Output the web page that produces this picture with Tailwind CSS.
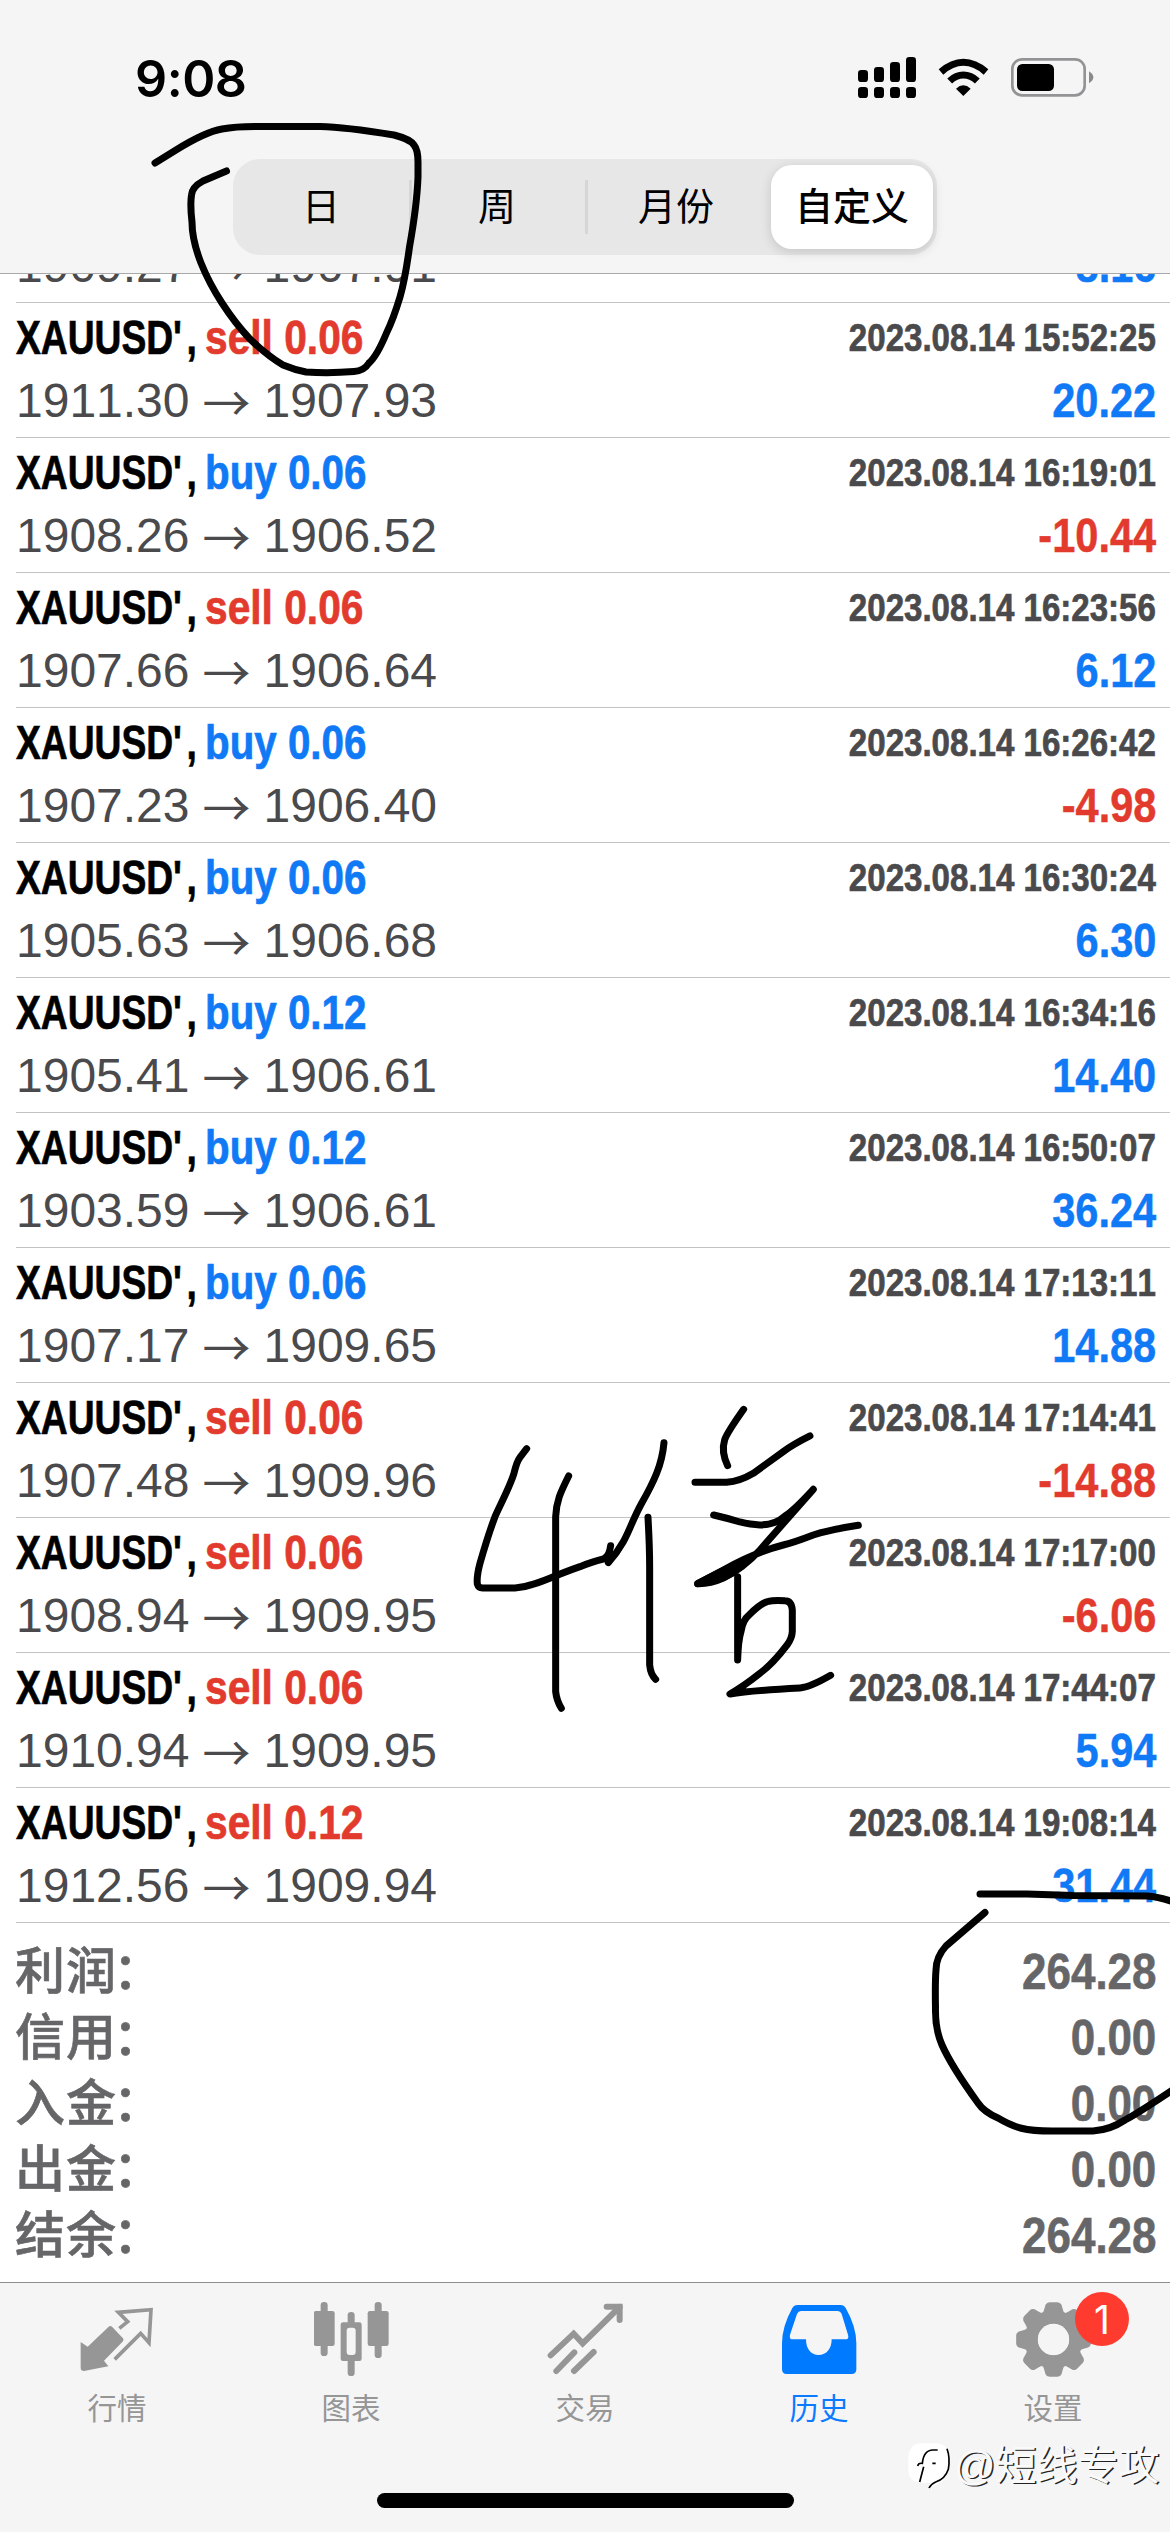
<!DOCTYPE html>
<html lang="zh-CN">
<head>
<meta charset="utf-8">
<title>历史</title>
<script src="https://cdn.jsdelivr.net/npm/@tailwindcss/browser@4"></script>
</head>
<body class="bg-white">
<div class="relative flex h-[2532px] w-[1170px] flex-col overflow-hidden bg-white font-['Liberation_Sans','Noto_Sans_CJK_SC',sans-serif] [font-kerning:none]">

  <header class="flex h-[274px] shrink-0 flex-col border-b border-[#a9a9ac] bg-[#f5f5f6]">
    <div class="flex h-[159px] justify-between pl-[135px] pr-[75px] pt-[46px]">
      <div class="h-[64px] origin-left scale-x-[.985] font-[Inter] text-[51px] font-semibold leading-[66px] tracking-[-0.5px]">9:08</div>
      <svg class="mt-[4px] h-[60px] w-[240px]" viewBox="39 30 720 180">
        <g>
          <rect x="48" y="90" width="30" height="36" rx="10"/><rect x="96" y="81" width="30" height="45" rx="10"/><rect x="144" y="66" width="30" height="60" rx="10"/><rect x="192" y="51" width="30" height="75" rx="10"/>
          <rect x="48" y="141" width="30" height="33" rx="10"/><rect x="96" y="141" width="30" height="33" rx="10"/><rect x="144" y="141" width="30" height="33" rx="10"/><rect x="192" y="141" width="30" height="33" rx="10"/>
        </g>
        <g fill="none" stroke="#000" stroke-width="21">
          <path d="M297 96Q330 67 364 67Q399 67 432 96"/><path d="M323 123Q342 105 364 105Q387 105 406 123"/>
        </g>
        <path d="M342 146Q364 126 386 146L364 168Z"/>
        <rect x="511" y="58" width="217" height="108" rx="29" fill="none" stroke="#939395" stroke-width="8"/>
        <rect x="525" y="72" width="111" height="81" rx="16"/>
        <path d="M741 94Q754 102 754 112Q754 122 741 130Z" fill="#8a8a8c"/>
      </svg>
    </div>
    <div class="ml-[233px] flex h-[96px] w-[704px] items-center rounded-[27px] bg-[#e7e7e8] text-[38px]">
      <div class="w-[176px] text-center">日</div>
      <div class="-mr-[3px] h-[54px] w-[3px] bg-[#d6d6d9]"></div>
      <div class="w-[176px] text-center">周</div>
      <div class="-mr-[3px] h-[54px] w-[3px] bg-[#d6d6d9]"></div>
      <div class="w-[182px] text-center">月份</div>
      <div class="ml-[4px] h-[84px] w-[162px] rounded-[21px] bg-white text-center font-medium leading-[84px] shadow-[0_3px_12px_rgba(0,0,0,.15)]">自定义</div>
    </div>
  </header>

  <main class="flex h-[2008px] shrink-0 flex-col justify-end overflow-hidden">
    <div id="deals" class="flex flex-col"></div>
    <div id="summary" class="flex h-[359px] shrink-0 flex-col pl-[15px] pr-[14px] pt-[16px] text-[#666668]"></div>
  </main>

  <nav class="flex h-[250px] shrink-0 flex-col border-t border-[#8e8e92] bg-[#f5f5f6]">
    <div class="grid grid-cols-5 pt-[19px] text-[29.5px] leading-[40px] text-[#969696]">
      <div class="flex flex-col items-center gap-[12px]">
        <svg class="size-[75px]" viewBox="58 36 225 225" fill="#969696">
          <path d="M60 156L81 170L144 110Q149 106 154 110L187 145Q190 150 187 154L130 212L143 229L70 243Q60 243 60 234Z"/>
          <path d="M176 115L201 95L173 67L271 59L265 158L240 130L162 208" fill="none" stroke="#969696" stroke-width="11"/>
        </svg>
        <div>行情</div>
      </div>
      <div class="flex flex-col items-center gap-[12px]">
        <svg class="size-[75px]" viewBox="760 36 225 225" fill="#969696">
          <rect x="780" y="36" width="21" height="162" rx="10"/><rect x="759" y="63" width="63" height="105" rx="7"/>
          <rect x="942" y="36" width="21" height="168" rx="10"/><rect x="921" y="63" width="63" height="105" rx="7"/>
          <rect x="861" y="66" width="21" height="192" rx="10"/><rect x="840" y="97" width="63" height="116" rx="7"/>
          <rect x="858" y="113" width="27" height="82" rx="9" fill="#f5f5f6"/>
        </svg>
        <div>图表</div>
      </div>
      <div class="flex flex-col items-center gap-[12px]">
        <svg class="size-[75px] overflow-visible" viewBox="52 36 225 225" fill="none" stroke="#969696" stroke-width="18" stroke-linecap="round">
          <path d="M60 196L129 131L156 160L267 51"/><path d="M228 50H267V90" stroke-linejoin="miter"/>
          <path d="M77 243L131 187M130 243L189 186"/>
        </svg>
        <div>交易</div>
      </div>
      <div class="flex flex-col items-center gap-[12px] text-[#0a7aff]">
        <svg class="size-[75px]" viewBox="754 36 225 225">
          <path fill="#007aff" fill-rule="evenodd" d="M800 45H930Q940 45 945 54Q977 110 977 160V238Q977 252 963 252H768Q754 252 754 238V160Q754 110 785 54Q790 45 800 45ZM811 63Q803 63 799 72L778 134Q775 148 786 148H826C826 176 840 195 864 195C888 195 903 176 903 148H944Q956 148 952 134L933 72Q929 63 920 63Z"/>
        </svg>
        <div>历史</div>
      </div>
      <div class="relative flex flex-col items-center gap-[12px]">
        <svg class="size-[75px]" viewBox="-112.5 -112.5 225 225" fill="#969696">
          <path id="tooth" d="M-40 -68L-30 -84Q-27 -92 -24 -104Q-20 -112 -12 -112H12Q20 -112 24 -104Q27 -92 30 -84L40 -68Z"/>
          <use href="#tooth" transform="rotate(45)"/><use href="#tooth" transform="rotate(90)"/><use href="#tooth" transform="rotate(135)"/><use href="#tooth" transform="rotate(180)"/><use href="#tooth" transform="rotate(225)"/><use href="#tooth" transform="rotate(270)"/><use href="#tooth" transform="rotate(315)"/>
          <circle r="67" fill="none" stroke="#969696" stroke-width="41"/>
          <circle r="47" fill="#f5f5f6"/>
        </svg>
        <div>设置</div>
        <div class="absolute left-[139px] top-[-10px] flex size-[54px] items-center justify-center rounded-full bg-[#ff3b30] font-[Inter] text-[39px] leading-none text-white">1</div>
      </div>
    </div>
    <div class="mt-auto mb-[24px] ml-[377px] h-[15px] w-[417px] rounded-full bg-black"></div>
  </nav>

  <!-- watermark -->
  <div class="absolute left-[907px] top-[2438px] flex items-center">
    <svg class="h-[56px] w-[48px]" viewBox="20 486 144 168">
      <path d="M62 502H108Q146 505 146 545V575Q140 620 86 634Q88 626 94 620H62Q24 618 24 580V545Q26 504 62 502Z" fill="#fff"/>
      <path d="M58 618L70 572M52 570Q54 560 66 562Q70 522 98 522H112M96 562H106" fill="none" stroke="#000" stroke-width="5"/>
      <path d="M140 518Q150 545 144 580Q134 610 106 618Q92 624 86 636" fill="none" stroke="#000" stroke-width="5"/>
    </svg>
    <div class="-ml-px whitespace-nowrap text-[41px] leading-[56px] text-[#fafafa] [text-shadow:1.5px_1px_0.5px_#222]">@短线专攻</div>
  </div>

  <!-- pen annotations -->
  <svg class="pointer-events-none absolute left-0 top-0 h-[2532px] w-[1170px]" viewBox="0 0 1170 2532" fill="none" stroke="#000" stroke-width="7" stroke-linecap="round" stroke-linejoin="round">
    <path d="M155 163L176 150Q205 132 222 129Q235 126.500 255 126.500H320Q345 127 394 135Q410 139 414 145Q418 150 418 162V177Q417 205 409.500 247Q405 280 400 297Q393 320 386.500 333Q377 356 369 363Q364 371 354 371.500Q330 373.500 306 372Q295 370 283 365Q266 355 249 338Q235 323 222 303Q209 283 201 263Q192 240 192 222Q190 205 191.500 195Q192 187 203 181L226.500 171"/>
    <g transform="translate(440 1380) scale(.3333)" stroke-width="21">
      <path d="M260 206L240 232Q230 245 222 280C210 320 185 365 165 410C150 450 130 515 120 550C112 580 110 595 112 612Q115 624 128 624H225Q250 623 275 614C310 605 340 588 420 560Q460 544 490 537Q508 530 512 497"/>
      <path d="M505 548Q530 520 550 485C565 460 580 415 605 370C625 335 640 305 650 280Q668 235 672 188"/>
      <path d="M386 288Q365 330 358 350Q348 380 347 410V935Q350 962 364 985"/>
      <path d="M624 412Q629 500 629 560V855Q632 885 647 898"/>
      <path d="M911 88Q860 160 854 180Q843 215 863 257"/>
      <path d="M765 307H860Q900 304 940 280L1030 215Q1060 193 1110 168"/>
      <path d="M821 405Q860 414 900 426Q990 450 1035 408Q1060 393 1120 328L960 510Q910 565 850 594Q810 612 773 611L850 570Q950 515 1030 495Q1060 488 1120 465Q1170 449 1255 436"/>
      <path d="M773 611L850 572L920 545Q880 585 830 600Z" fill="#000"/>
      <path d="M893 590V840Q895 780 903 755Q908 720 928 704Q965 668 985 664Q1000 660 1035 662Q1055 662 1057 690V755Q1056 775 1042 794Q1000 850 960 880Q910 920 870 942Q930 932 1080 924Q1110 922 1172 886"/>
    </g>
    <path d="M980 1894H1027L1073 1895.500L1147 1896Q1160 1897 1180 1904"/>
    <path d="M985 1912.500L946 1946Q936 1957 936 1970Q935 1982 935.500 2008Q935 2029 942 2045C950 2063 965 2085 978 2103Q984 2112 998 2118C1015 2128 1025 2131 1052 2131H1093Q1110 2130 1125 2120Q1140 2112 1180 2085"/>
  </svg>
</div>

<script>
  const deals = [
    ['sell', '0.06', '1911.30', '1907.93', '08.14 15:52:25', '20.22'],
    ['buy', '0.06', '1908.26', '1906.52', '08.14 16:19:01', '-10.44'],
    ['sell', '0.06', '1907.66', '1906.64', '08.14 16:23:56', '6.12'],
    ['buy', '0.06', '1907.23', '1906.40', '08.14 16:26:42', '-4.98'],
    ['buy', '0.06', '1905.63', '1906.68', '08.14 16:30:24', '6.30'],
    ['buy', '0.12', '1905.41', '1906.61', '08.14 16:34:16', '14.40'],
    ['buy', '0.12', '1903.59', '1906.61', '08.14 16:50:07', '36.24'],
    ['buy', '0.06', '1907.17', '1909.65', '08.14 17:13:11', '14.88'],
    ['sell', '0.06', '1907.48', '1909.96', '08.14 17:14:41', '-14.88'],
    ['sell', '0.06', '1908.94', '1909.95', '08.14 17:17:00', '-6.06'],
    ['sell', '0.06', '1910.94', '1909.95', '08.14 17:44:07', '5.94'],
    ['sell', '0.12', '1912.56', '1909.94', '08.14 19:08:14', '31.44'],
  ];

  const priceLine = (from, to, profit) => `
      <div class="flex h-[64px] justify-between leading-[63px]">
        <span class="flex text-[#4a4a4d]">${from}<span class="mx-[13px] w-[48px] font-['Noto_Sans_CJK_JP']">→</span>${to}</span>
        <span class="${profit[0] === '-' ? 'text-[#e23b2e]' : 'text-[#1079f5]'} origin-right scale-x-[.865] font-bold [-webkit-text-stroke:0.5px]">${profit}</span>
      </div>`;

  // The oldest visible deal has scrolled under the header; only its price line shows.
  const scrolled = `
    <div class="ml-4 flex h-[135px] shrink-0 flex-col border-b border-[#c3c3c6] pr-[14px] pt-[66px] text-[48px] whitespace-nowrap">
      ${priceLine('1909.27', '1907.91', '8.16')}
    </div>`;

  document.getElementById('deals').innerHTML = scrolled + deals.map(([side, lot, from, to, time, profit]) => `
    <div class="ml-4 flex h-[135px] shrink-0 flex-col border-b border-[#c3c3c6] pr-[14px] pt-[2px] text-[48px] leading-[66px] whitespace-nowrap">
      <div class="flex h-[64px] justify-between font-bold [-webkit-text-stroke:0.7px]">
        <div class="flex">
          <span class="w-[189px] origin-left scale-x-[.775] text-black">XAUUSD<span class="mr-[6px]">'</span>,</span>
          <span class="${side === 'buy' ? 'scale-x-[.84] text-[#1079f5]' : 'scale-x-[.848] text-[#e23b2e]'} origin-left">${side} ${lot}</span>
        </div>
        <span class="origin-right scale-x-[.87] text-[38px] leading-[66px] text-[#4a4a4d]">2023.${time}</span>
      </div>
      ${priceLine(from, to, profit)}
    </div>`).join('');

  const totals = [['利润', '264.28'], ['信用', '0.00'], ['入金', '0.00'], ['出金', '0.00'], ['结余', '264.28']];
  document.getElementById('summary').innerHTML = totals.map(([label, value]) => `
    <div class="flex h-[66px] justify-between leading-[66px]">
      <span class="flex text-[50px] font-medium tracking-[1px] [-webkit-text-stroke:0.6px]">${label}<span class="-ml-[4px]">：</span></span>
      <span class="origin-right scale-x-[.87] text-[50.5px] font-bold [-webkit-text-stroke:0.6px]">${value}</span>
    </div>`).join('');
</script>
</body>
</html>
